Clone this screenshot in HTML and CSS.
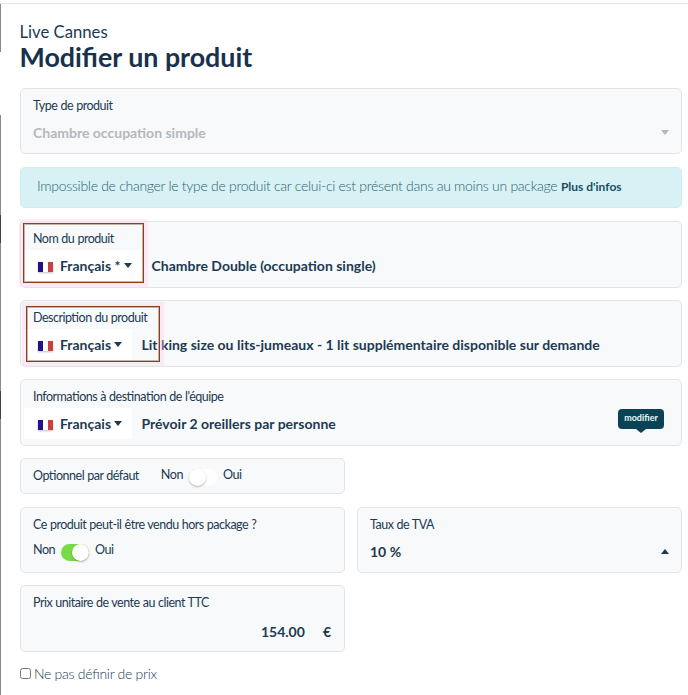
FILE: index.html
```
<!DOCTYPE html>
<html lang="fr">
<head>
	<meta charset="UTF-8">
	<title>Modifier un produit</title>
	<link rel="stylesheet" href="styles.css">
</head>
<body>
	<div class="edge"></div>
	<div class="page">
		<div class="subtitle">Live Cannes</div>
		<h1>Modifier un produit</h1>

		<div class="field disabled">
			<div class="label">Type de produit</div>
			<div class="select"><span>Chambre occupation simple</span><i class="caret"></i></div>
		</div>

		<div class="alert">Impossible de changer le type de produit car celui-ci est présent dans au moins un package <a class="more">Plus d'infos</a></div>

		<div class="field tall">
			<div class="label">Nom du produit</div>
			<div class="line">
				<div class="lang lang-required"><span class="flag"></span><span>Français *</span><i class="caret"></i></div>
				<div class="value">Chambre Double (occupation single)</div>
			</div>
			<div class="outline outline-name"></div>
		</div>

		<div class="field tall">
			<div class="label">Description du produit</div>
			<div class="line">
				<div class="lang"><span class="flag"></span><span>Français</span><i class="caret"></i></div>
				<div class="value">Lit king size ou lits-jumeaux - 1 lit supplémentaire disponible sur demande</div>
			</div>
			<div class="outline outline-desc"></div>
		</div>

		<div class="field tall">
			<div class="label">Informations à destination de l'équipe</div>
			<div class="line">
				<div class="lang"><span class="flag"></span><span>Français</span><i class="caret"></i></div>
				<div class="value">Prévoir 2 oreillers par personne</div>
			</div>
			<div class="tooltip">modifier</div>
		</div>

		<div class="columns">
			<div class="field option">
				<div class="label">Optionnel par défaut</div>
				<div class="toggle"><span>Non</span><i class="switch"></i><span>Oui</span></div>
			</div>
		</div>

		<div class="columns">
			<div class="field">
				<div class="label">Ce produit peut-il être vendu hors package ?</div>
				<div class="toggle"><span>Non</span><i class="switch on"></i><span>Oui</span></div>
			</div>
			<div class="field">
				<div class="label">Taux de TVA</div>
				<div class="select"><span>10 %</span><i class="caret up"></i></div>
			</div>
		</div>

		<div class="columns">
			<div class="field tall">
				<div class="label">Prix unitaire de vente au client TTC</div>
				<div class="price"><span>154.00</span><span>€</span></div>
			</div>
		</div>

		<label class="check"><input type="checkbox">Ne pas définir de prix</label>
	</div>
</body>
</html>
```
FILE: styles.css
```
*{margin: 0;padding: 0;box-sizing: border-box;}
body{height: 695px;overflow: hidden;background: #fff;font-family: Lato,"Liberation Sans",sans-serif;font-feature-settings: "liga" 1;color: #1d3a52;display: flex;border-top: 1px solid #e3e5e6;margin-top: 3px;}
.edge{width: 1px;height: 692px;flex: none;background: linear-gradient(#8a8a8a 48px,#fff 48px,#fff 111px,#8a8a8a 111px,#8a8a8a 211px,#3c3f44 211px,#3c3f44 239px,#8a8a8a 239px,#8a8a8a 387px,#3c3f44 387px,#3c3f44 415px,#8a8a8a 415px);}
.page{width: 662px;margin-left: 19px;padding-top: 18px;}
.subtitle{font-size: 16.7px;line-height: 20px;margin-left: -.5px;}
h1{font-size: 26.8px;line-height: 30px;font-weight: 700;color: #17324a;margin: 0 0 16px -.5px;}
.field{position: relative;height: 66px;border: 1px solid #e1e5e9;border-radius: 5px;background: #f7f9fb;padding: 8px 12px 0;margin-bottom: 13px;}
.field.tall{height: 67px;margin-bottom: 12px;}
.label{height: 16px;font-size: 12.5px;line-height: 17px;letter-spacing: -.5px;word-spacing: .4px;white-space: nowrap;}
.select{display: flex;justify-content: space-between;align-items: center;height: 20px;margin-top: 9px;font-size: 14px;font-weight: 700;}
.disabled .select{color: #b3b8be;}
.caret{width: 0;height: 0;border: 4px solid transparent;border-top: 5px solid currentColor;border-bottom: 0;}
.caret.up{border-top: 0;border-bottom: 5px solid currentColor;}
.alert{height: 41px;border: 1px solid #d2ebef;border-radius: 5px;background: #d7f1f5;padding: 0 16px;margin-bottom: 13px;font-size: 14px;line-height: 36px;font-weight: 300;letter-spacing: -.28px;color: #2c6270;white-space: nowrap;}
.more{font-size: 12px;font-weight: 700;letter-spacing: 0;color: #164e63;}

/* champs traduits */
.line{display: flex;height: 31px;margin: 4px 0 0 -9px;font-size: 14px;line-height: 32px;font-weight: 700;}
.lang{display: flex;align-items: center;width: 108px;padding-left: 14px;background: #fff;border-radius: 2px;}
.lang-required{width: 118px;}
.lang .caret{margin-left: 3px;}
.lang-required .caret{margin-left: 4px;}
.flag{width: 15px;height: 10px;margin: 3px 7px 0 0;background: linear-gradient(90deg,#23108a 5px,#fff 5px,#fff 10px,#c8413f 10px);box-shadow: 0 1px 2px rgba(0,0,0,.25);}
.value{margin-left: 9.5px;white-space: nowrap;}
.outline{position: absolute;border: 1px solid #86401f;box-shadow: inset 0 0 0 1px rgba(135,73,31,.4),0 0 0 4px rgba(255,205,240,.35);}
.outline-name{left: 2px;top: 1px;width: 121px;height: 60px;}
.outline-desc{left: 5px;top: 5px;width: 134px;height: 56px;}
.tooltip{position: absolute;right: 17px;top: 29px;width: 46px;height: 20px;border-radius: 4px;background: #0b4356;color: #e6fafa;font-size: 9px;line-height: 18px;font-weight: 700;text-align: center;}
.tooltip:after{content: "";position: absolute;left: 18px;top: 20px;border: 5px solid transparent;border-top: 4px solid #0b4356;border-bottom: 0;}

.columns{display: grid;grid-template-columns: 325px 325px;column-gap: 12px;}
.columns .field{margin-bottom: 12px;}
.columns .option{display: flex;height: 36px;margin-bottom: 13px;}
.option .toggle{margin: 0 0 0 22px;}
.toggle{display: flex;height: 16px;margin-top: 10px;font-size: 12.6px;line-height: 16px;letter-spacing: -.5px;}
.switch{position: relative;width: 28px;height: 17px;margin: 2px 6px 0;border-radius: 9px;background: #fff;}
.switch:after{content: "";position: absolute;left: 0;top: 0;width: 17px;height: 17px;border-radius: 50%;background: #fff;box-shadow: 0 1px 2px rgba(0,0,0,.3);}
.switch.on{background: #76dc45;}
.switch.on:after{left: 11px;}
.price{display: flex;justify-content: flex-end;margin-top: 12px;padding-right: 1px;font-size: 14px;line-height: 20px;font-weight: 700;}
.price span+span{margin-left: 18px;}
.check{display: flex;align-items: center;height: 20px;margin-top: -1px;font-size: 14px;font-weight: 300;letter-spacing: -.28px;}
.check input{width: 11px;height: 11px;margin-right: 3px;}
```
